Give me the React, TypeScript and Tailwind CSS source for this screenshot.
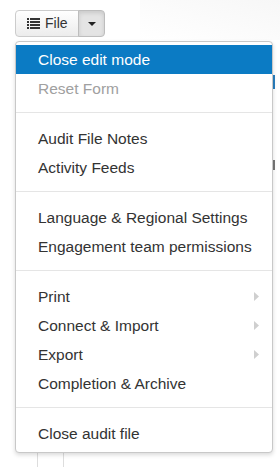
import React from 'react';

type Item = { label: string; disabled?: boolean; active?: boolean; sub?: boolean };

const groups: Item[][] = [
  [{ label: 'Close edit mode', active: true }, { label: 'Reset Form', disabled: true }],
  [{ label: 'Audit File Notes' }, { label: 'Activity Feeds' }],
  [{ label: 'Language & Regional Settings' }, { label: 'Engagement team permissions' }],
  [
    { label: 'Print', sub: true },
    { label: 'Connect & Import', sub: true },
    { label: 'Export', sub: true },
    { label: 'Completion & Archive' },
  ],
  [{ label: 'Close audit file' }],
];

function ListIcon() {
  return (
    <svg width="13" height="11" viewBox="0 0 13 11" className="text-[#333]">
      {[0, 3, 6, 9].map((y) => (
        <g key={y} fill="currentColor">
          <rect x="0" y={y} width="2" height="2" />
          <rect x="3" y={y} width="10" height="2" />
        </g>
      ))}
    </svg>
  );
}

function MenuRow({ item }: { item: Item }) {
  return (
    <div
      className={
        'flex h-[29px] items-center justify-between pl-[22px] pr-[13px] text-[15.5px] ' +
        (item.active ? 'bg-[#0b7bc4] text-white' : item.disabled ? 'text-[#a0a0a0]' : 'text-[#333]')
      }
    >
      <span>{item.label}</span>
      {item.sub && (
        <svg width="5" height="9" viewBox="0 0 5 9">
          <path d="M0 0 L5 4.5 L0 9 Z" fill="#cfcfcf" />
        </svg>
      )}
    </div>
  );
}

export default function App() {
  return (
    <div
      className="relative h-[467px] w-[280px] overflow-hidden bg-white"
      style={{ fontFamily: '"Liberation Sans", Arial, sans-serif' }}
    >
      <div className="absolute right-0 top-0 h-[40px] w-[140px] bg-gradient-to-bl from-[#f7f7f7] to-white" />
      <div className="absolute bottom-0 left-[37px] h-[20px] w-px bg-[#ddd]" />
      <div className="absolute bottom-0 left-[63px] h-[20px] w-px bg-[#ddd]" />
      <div className="absolute right-[5px] top-[75px] h-[14px] w-[2px] bg-[#2a7fbf]" />
      <div className="absolute right-[5px] top-[160px] h-[10px] w-[2px] bg-[#777]" />

      <div className="relative px-[15px] pt-[10px]">
        <div className="flex h-[27px] w-fit">
          <div className="flex w-[64px] items-center gap-[5px] rounded-l-[4px] border border-[#ccc] bg-gradient-to-b from-white to-[#ececec] pl-[11px] text-[14px] text-[#333]">
            <ListIcon />
            <span>File</span>
          </div>
          <div className="-ml-px flex w-[27px] items-center justify-center rounded-r-[4px] border border-[#bdbdbd] bg-[#e4e4e4] shadow-[inset_0_2px_4px_rgba(0,0,0,0.12)]">
            <svg width="8" height="4" viewBox="0 0 8 4">
              <path d="M0 0 L8 0 L4 4 Z" fill="#222" />
            </svg>
          </div>
        </div>

        <div className="mt-[4px] w-[258px] rounded-[4px] border border-[#c8c8c8] bg-white pb-[4px] pt-[3px] shadow-[0_2px_4px_rgba(0,0,0,0.15)]">
          {groups.map((g, gi) => (
            <div key={gi}>
              {gi > 0 && <div className="mb-[11px] mt-[9px] h-px bg-[#e5e5e5]" />}
              {g.map((item) => (
                <MenuRow key={item.label} item={item} />
              ))}
            </div>
          ))}
        </div>
      </div>
    </div>
  );
}
